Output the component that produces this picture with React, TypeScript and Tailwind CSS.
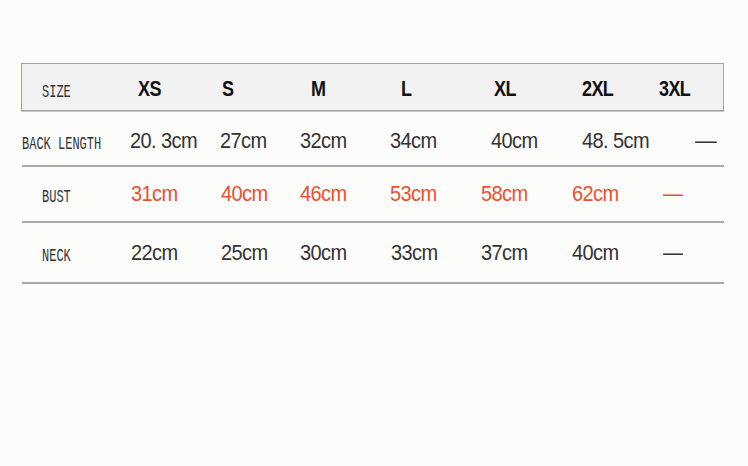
import React from "react";

const num = "font-['Liberation_Sans',Arial,sans-serif] text-[20px] tracking-[-0.6px] leading-none whitespace-nowrap inline-block scale-y-[1.12] origin-center";
const lab = "font-['Liberation_Mono',monospace] text-[12px] leading-none text-[#333] whitespace-nowrap inline-block scale-y-[1.5] origin-center";

type Cell = { t: string; w: number };

function Row({ cells, color, h, pt, indent }: { cells: Cell[]; color: string; h: string; pt: string; indent: string }) {
  return (
    <div className={`flex items-center w-[702px] ml-[22px] border-b-2 border-[#ababab] ${h} ${pt}`}>
      {cells.map((c, i) =>
        i === 0 ? (
          <div key={i} style={{ width: c.w }} className={`shrink-0 ${indent}`}>
            <span className={lab}>{c.t}</span>
          </div>
        ) : (
          <div key={i} style={{ width: c.w }} className="shrink-0">
            <span className={`${num} ${color}`}>{c.t}</span>
          </div>
        )
      )}
    </div>
  );
}

export default function App() {
  const header: Cell[] = [
    { t: "SIZE", w: 116 },
    { t: "XS", w: 84 },
    { t: "S", w: 89 },
    { t: "M", w: 90 },
    { t: "L", w: 93 },
    { t: "XL", w: 88 },
    { t: "2XL", w: 77 },
    { t: "3XL", w: 60 },
  ];
  return (
    <div className="w-[748px] h-[466px] bg-[#fcfcfa] pt-[63px] overflow-hidden">
      <div className="ml-[21px] w-[703px] h-[48px] pt-[3px] bg-[#f2f2f2] border border-[#a3a3a3] shadow-[0_1px_0_#c8c8c8] flex items-center">
        {header.map((c, i) =>
          i === 0 ? (
            <div key={i} style={{ width: 116 }} className="shrink-0 pl-[20px]">
              <span className={lab}>SIZE</span>
            </div>
          ) : (
            <div key={i} style={{ width: c.w }} className="shrink-0">
              <span className="font-['Liberation_Sans',Arial,sans-serif] text-[18px] font-semibold text-[#111] leading-none inline-block scale-y-[1.2] tracking-[-0.6px]">
                {c.t}
              </span>
            </div>
          )
        )}
      </div>
      <Row
        h="h-[56px]"
        pt="pt-[6px]"
        indent="pl-0"
        color="text-[#333]"
        cells={[
          { t: "BACK LENGTH", w: 108 },
          { t: "20. 3cm", w: 90 },
          { t: "27cm", w: 80 },
          { t: "32cm", w: 90 },
          { t: "34cm", w: 101 },
          { t: "40cm", w: 91 },
          { t: "48. 5cm", w: 113 },
          { t: "––", w: 27 },
        ]}
      />
      <Row
        h="h-[56px]"
        pt="pt-[0px]"
        indent="pl-[20px]"
        color="text-[#e8522e]"
        cells={[
          { t: "BUST", w: 109 },
          { t: "31cm", w: 90 },
          { t: "40cm", w: 79 },
          { t: "46cm", w: 90 },
          { t: "53cm", w: 91 },
          { t: "58cm", w: 91 },
          { t: "62cm", w: 91 },
          { t: "—", w: 30 },
        ]}
      />
      <Row
        h="h-[61px]"
        pt="pt-[0px]"
        indent="pl-[20px]"
        color="text-[#333]"
        cells={[
          { t: "NECK", w: 109 },
          { t: "22cm", w: 90 },
          { t: "25cm", w: 79 },
          { t: "30cm", w: 91 },
          { t: "33cm", w: 90 },
          { t: "37cm", w: 91 },
          { t: "40cm", w: 91 },
          { t: "—", w: 30 },
        ]}
      />
    </div>
  );
}
